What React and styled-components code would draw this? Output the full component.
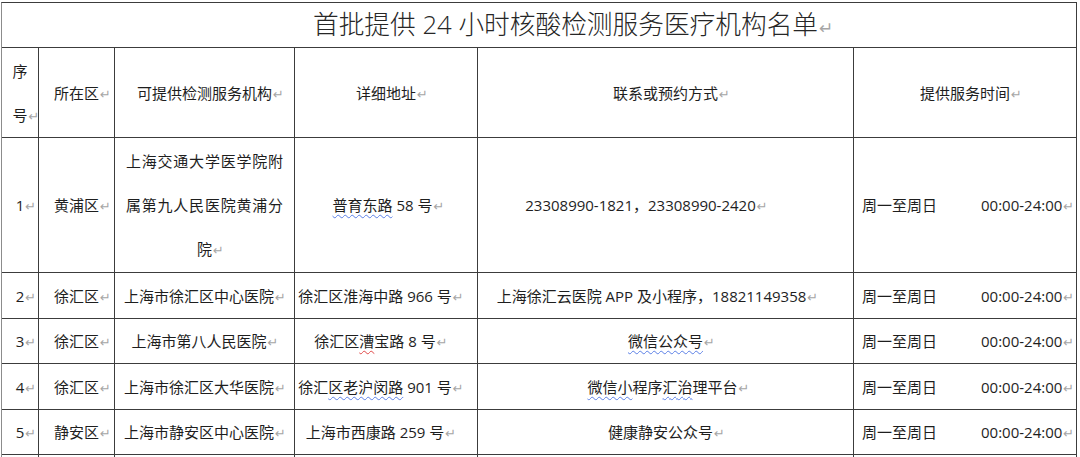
import React from 'react'
import styled, { createGlobalStyle } from 'styled-components'

const GlobalStyle = createGlobalStyle`
  html, body {
    margin: 0;
    padding: 0;
    background: #fff;
    overflow: hidden;
  }
  body {
    font-family: "Open Sans", "Noto Sans CJK SC", sans-serif;
    color: #1e1e1e;
  }
`

const Page = styled.div`
  padding: 2px 0 0 1px;
`

const Table = styled.table`
  box-sizing: border-box;
  table-layout: fixed;
  border-collapse: separate;
  border-spacing: 0;
  width: 1076px;
  border-top: 1px solid #3c3c3c;
  border-left: 1px solid #8c8c8c;
`

const Cell = styled.td`
  box-sizing: border-box;
  height: ${p => p.$h}px;
  padding: 0 ${p => (p.$shift || 0) * 2}px 0 0;
  border-right: 1px solid #3c3c3c;
  border-bottom: 1px solid #3c3c3c;
  font-size: 15px;
  line-height: 44px;
  text-align: center;
  vertical-align: middle;
  white-space: nowrap;
  overflow: hidden;
`

const TitleCell = styled(Cell)`
  padding-left: 53px;
  font-size: 25.7px;
  font-weight: 300;
  color: #262626;
`

const WrapCell = styled(Cell)`
  padding: 0 11px;
  white-space: normal;
  text-align: justify;
  text-align-last: center;
`

const TimeCell = styled(Cell)`
  padding-left: 8px;
  text-align: left;
`

const Days = styled.span`
  display: inline-block;
  width: 119px;
`

// Word's paragraph mark: drawn after the text but not counted for centring
const Mark = styled.span`
  display: inline-block;
  width: 0;
  white-space: nowrap;
  color: #a6a6a6;
  font-family: "DejaVu Sans", sans-serif;
  font-size: ${p => p.$size || 13}px;
  line-height: 1;
  &::before {
    content: "↵";
    padding-left: 1px;
  }
`

const Squiggle = styled.span`
  text-decoration-line: underline;
  text-decoration-style: wavy;
  text-decoration-color: ${p => (p.$red ? '#e04848' : '#5a7fe6')};
  text-decoration-thickness: 1px;
  text-underline-offset: 3px;
`

const cols = [37, 76, 180, 183, 376, 223]

const headers = ['可提供检测服务机构', '详细地址', '联系或预约方式', '提供服务时间']

const rows = [
  {
    no: '1',
    district: '黄浦区',
    org: '上海交通大学医学院附属第九人民医院黄浦分院',
    wrap: true,
    addr: <><Squiggle>普育东路</Squiggle> 58 号</>,
    contact: '23308990-1821，23308990-2420',
    h: 135,
    shift: [0, 3.5, 25],
  },
  {
    no: '2',
    district: '徐汇区',
    org: '上海市徐汇区中心医院',
    addr: '徐汇区淮海中路 966 号',
    contact: '上海徐汇云医院 APP 及小程序，18821149358',
    h: 46,
    shift: [5.5, 11, 14],
  },
  {
    no: '3',
    district: '徐汇区',
    org: '上海市第八人民医院',
    addr: <>徐汇区<Squiggle $red>漕</Squiggle>宝路 8 号</>,
    contact: <Squiggle>微信公众号</Squiggle>,
    h: 45,
    shift: [5.5, 11, 0],
  },
  {
    no: '4',
    district: '徐汇区',
    org: '上海市徐汇区大华医院',
    addr: <>徐汇<Squiggle>区老沪闵路</Squiggle> 901 号</>,
    contact: <><Squiggle>微信小</Squiggle>程序<Squiggle>汇治</Squiggle>理平台</>,
    h: 46,
    shift: [5.5, 11, 3],
  },
  {
    no: '5',
    district: '静安区',
    org: '上海市静安区中心医院',
    addr: '上海市西康路 259 号',
    contact: '健康静安公众号',
    h: 45,
    shift: [5.5, 11, 5],
  },
]

function Row({ row }) {
  const OrgCell = row.wrap ? WrapCell : Cell
  return (
    <tr>
      <Cell $h={row.h}>{row.no}<Mark /></Cell>
      <Cell $h={row.h}>{row.district}<Mark /></Cell>
      <OrgCell $h={row.h} $shift={row.shift[0]}>{row.org}<Mark /></OrgCell>
      <Cell $h={row.h} $shift={row.shift[1]}>{row.addr}<Mark /></Cell>
      <Cell $h={row.h} $shift={row.shift[2]}>{row.contact}<Mark /></Cell>
      <TimeCell $h={row.h}>
        <Days>周一至周日</Days>00:00-24:00<Mark />
      </TimeCell>
    </tr>
  )
}

export default function App() {
  return (
    <Page>
      <GlobalStyle />
      <Table>
        <colgroup>
          {cols.map((w, i) => <col key={i} style={{ width: w }} />)}
        </colgroup>
        <tbody>
          <tr>
            <TitleCell colSpan={6} $h={45}>
              首批提供 24 小时核酸检测服务医疗机构名单<Mark $size={17} />
            </TitleCell>
          </tr>
          <tr>
            <Cell $h={90}>序<br />号<Mark /></Cell>
            <Cell $h={90}>所在区<Mark /></Cell>
            {headers.map(h => (
              <Cell key={h} $h={90}>{h}<Mark /></Cell>
            ))}
          </tr>
          {rows.map(r => <Row key={r.no} row={r} />)}
          <tr>
            {cols.map((w, i) => <Cell key={i} $h={45} />)}
          </tr>
        </tbody>
      </Table>
    </Page>
  )
}
